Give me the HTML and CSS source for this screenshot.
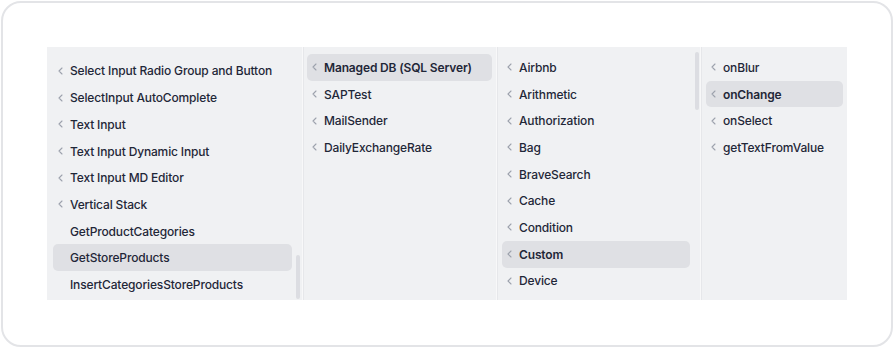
FILE: index.html
```html
<!DOCTYPE html>
<html lang="en">
  <head>
    <meta charset="UTF-8" />
    <meta name="viewport" content="width=device-width, initial-scale=1.0" />
    <title>Column browser</title>
    <link rel="stylesheet" href="styles.css">
  </head>

  <body>
    <main class="card">
      <section class="browser">
        <div class="col col-first">
          <ul>
            <li class="item"><span class="chev"><svg viewBox="0 0 5 8"><path d="M4 1L1 4l3 3" /></svg></span>Select Input Radio Group and Button</li>
            <li class="item"><span class="chev"><svg viewBox="0 0 5 8"><path d="M4 1L1 4l3 3" /></svg></span>SelectInput AutoComplete</li>
            <li class="item"><span class="chev"><svg viewBox="0 0 5 8"><path d="M4 1L1 4l3 3" /></svg></span>Text Input</li>
            <li class="item"><span class="chev"><svg viewBox="0 0 5 8"><path d="M4 1L1 4l3 3" /></svg></span>Text Input Dynamic Input</li>
            <li class="item"><span class="chev"><svg viewBox="0 0 5 8"><path d="M4 1L1 4l3 3" /></svg></span>Text Input MD Editor</li>
            <li class="item"><span class="chev"><svg viewBox="0 0 5 8"><path d="M4 1L1 4l3 3" /></svg></span>Vertical Stack</li>
            <li class="item"><span class="chev"></span>GetProductCategories</li>
            <li class="item active"><span class="chev"></span>GetStoreProducts</li>
            <li class="item"><span class="chev"></span>InsertCategoriesStoreProducts</li>
          </ul>
          <div class="thumb thumb-first"></div>
        </div>

        <div class="col col-second">
          <ul>
            <li class="item active strong"><span class="chev"><svg viewBox="0 0 5 8"><path d="M4 1L1 4l3 3" /></svg></span>Managed DB (SQL Server)</li>
            <li class="item"><span class="chev"><svg viewBox="0 0 5 8"><path d="M4 1L1 4l3 3" /></svg></span>SAPTest</li>
            <li class="item"><span class="chev"><svg viewBox="0 0 5 8"><path d="M4 1L1 4l3 3" /></svg></span>MailSender</li>
            <li class="item"><span class="chev"><svg viewBox="0 0 5 8"><path d="M4 1L1 4l3 3" /></svg></span>DailyExchangeRate</li>
          </ul>
        </div>

        <div class="col col-third">
          <ul>
            <li class="item"><span class="chev"><svg viewBox="0 0 5 8"><path d="M4 1L1 4l3 3" /></svg></span>Airbnb</li>
            <li class="item"><span class="chev"><svg viewBox="0 0 5 8"><path d="M4 1L1 4l3 3" /></svg></span>Arithmetic</li>
            <li class="item"><span class="chev"><svg viewBox="0 0 5 8"><path d="M4 1L1 4l3 3" /></svg></span>Authorization</li>
            <li class="item"><span class="chev"><svg viewBox="0 0 5 8"><path d="M4 1L1 4l3 3" /></svg></span>Bag</li>
            <li class="item"><span class="chev"><svg viewBox="0 0 5 8"><path d="M4 1L1 4l3 3" /></svg></span>BraveSearch</li>
            <li class="item"><span class="chev"><svg viewBox="0 0 5 8"><path d="M4 1L1 4l3 3" /></svg></span>Cache</li>
            <li class="item"><span class="chev"><svg viewBox="0 0 5 8"><path d="M4 1L1 4l3 3" /></svg></span>Condition</li>
            <li class="item active strong"><span class="chev"><svg viewBox="0 0 5 8"><path d="M4 1L1 4l3 3" /></svg></span>Custom</li>
            <li class="item"><span class="chev"><svg viewBox="0 0 5 8"><path d="M4 1L1 4l3 3" /></svg></span>Device</li>
          </ul>
          <div class="thumb thumb-third"></div>
        </div>

        <div class="col col-fourth">
          <ul>
            <li class="item"><span class="chev"><svg viewBox="0 0 5 8"><path d="M4 1L1 4l3 3" /></svg></span>onBlur</li>
            <li class="item active strong"><span class="chev"><svg viewBox="0 0 5 8"><path d="M4 1L1 4l3 3" /></svg></span>onChange</li>
            <li class="item"><span class="chev"><svg viewBox="0 0 5 8"><path d="M4 1L1 4l3 3" /></svg></span>onSelect</li>
            <li class="item"><span class="chev"><svg viewBox="0 0 5 8"><path d="M4 1L1 4l3 3" /></svg></span>getTextFromValue</li>
          </ul>
        </div>
      </section>
    </main>
  </body>
</html>
```

FILE: styles.css
```css
body {
  margin: 0;
  padding: 0;
  background-color: #fff;
  font-family: Inter, "Noto Sans", sans-serif;
}

.card {
  margin: 1px;
  width: 892px;
  height: 346px;
  box-sizing: border-box;
  border: 2px solid #e3e4e7;
  border-radius: 20px;
  padding: 44px;
}

.browser {
  display: flex;
  width: 800px;
  height: 253px;
  background-color: #f0f1f3;
  overflow: hidden;
}

.col {
  position: relative;
  box-sizing: border-box;
  height: 100%;
  padding-top: 7px;
  border-right: 1px solid #f8f8f9;
  box-shadow: 1px 0 0 #e6e7ea;
}

.col-first {
  width: 256px;
  padding: 10.6px 10px 0 6px;
}

.col-second {
  width: 194px;
  padding-left: 4px;
  padding-right: 4px;
}

.col-third {
  width: 204px;
  padding-left: 5px;
  padding-right: 10px;
}

.col-fourth {
  width: 146px;
  padding-left: 5px;
  padding-right: 4px;
  border-right: none;
  box-shadow: none;
}

ul {
  list-style: none;
  margin: 0;
  padding: 0;
}

.item {
  display: flex;
  align-items: center;
  height: 26.7px;
  border-radius: 5px;
  font-size: 12px;
  font-weight: 500;
  letter-spacing: -0.15px;
  color: #1f2738;
  white-space: nowrap;
}

.item.active {
  background-color: #dfe0e4;
}

.item.strong {
  font-weight: 600;
}

.chev {
  display: flex;
  width: 17px;
  flex-shrink: 0;
  padding-left: 5px;
  box-sizing: border-box;
}

.chev svg {
  width: 5px;
  height: 8px;
  fill: none;
  stroke: #9da2ad;
  stroke-width: 1.1;
  stroke-linecap: round;
  stroke-linejoin: round;
}

.thumb {
  position: absolute;
  width: 4px;
  border-radius: 2px;
  background-color: #dcdde2;
}

.thumb-first {
  right: 2px;
  top: 208px;
  height: 44px;
}

.thumb-third {
  right: 1px;
  top: 5px;
  height: 58px;
}
```
